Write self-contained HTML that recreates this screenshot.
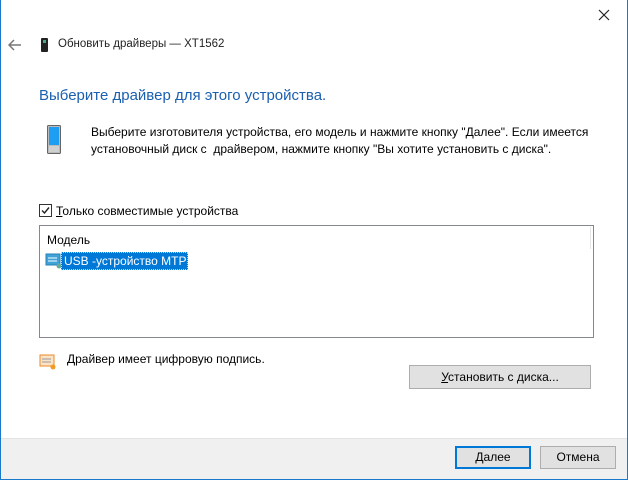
<!DOCTYPE html>
<html><head><meta charset="utf-8"><style>
*{margin:0;padding:0;box-sizing:border-box}
body{width:628px;height:480px;position:relative;background:#fff;font-family:"Liberation Sans",sans-serif;font-size:12px;color:#000;overflow:hidden}
.a{position:absolute;white-space:nowrap}
.btn{position:absolute;background:#e1e1e1;border:1px solid #adadad;text-align:center;line-height:20px;font-size:12px}
</style></head><body>
<div class="a" style="left:0;top:0;width:628px;height:480px;border:1px solid #1979ca;border-top:none"></div>
<div class="a" style="left:1px;top:438px;width:626px;height:41px;background:#f0f0f0;border-top:1px solid #e3e3e3"></div>
<svg class="a" style="left:8px;top:39px" width="14" height="12"><path d="M1 6H13M6 1L1 6L6 11" stroke="#777" stroke-width="1.5" fill="none"/></svg>
<svg class="a" style="left:598px;top:9px" width="12" height="12"><path d="M1 1L11 11M11 1L1 11" stroke="#222" stroke-width="1.2"/></svg>
<svg class="a" style="left:41px;top:38px" width="8" height="14"><rect x="0" y="0" width="7" height="14" rx="1" fill="#222"/><rect x="2" y="2" width="3" height="3" fill="#4a8"/></svg>
<div class="a" style="left:58px;top:38px;color:#222;font-size:11.5px">Обновить драйверы — XT1562</div>
<div class="a" style="left:39px;top:87px;font-size:15px;color:#1a5fb0">Выберите драйвер для этого устройства.</div>
<svg class="a" style="left:47px;top:125px" width="16" height="30"><rect x="0.5" y="0.5" width="13" height="28" rx="1" fill="#bbb" stroke="#666"/><rect x="2" y="2" width="10" height="18" fill="#1e9ef2"/><rect x="2" y="21" width="10" height="6" fill="#d0d0d0"/></svg>
<div class="a" style="left:91px;top:124px;line-height:17px">Выберите изготовителя устройства, его модель и нажмите кнопку "Далее". Если имеется<br>установочный диск с&nbsp; драйвером, нажмите кнопку "Вы хотите установить с диска".</div>
<div class="a" style="left:39px;top:204px;width:13px;height:13px;border:1px solid #333"></div>
<svg class="a" style="left:40px;top:205px" width="11" height="11"><path d="M2 5.5L4.5 8L9 2.5" stroke="#222" stroke-width="1.4" fill="none"/></svg>
<div class="a" style="left:56px;top:204px"><u>Т</u>олько совместимые устройства</div>
<div class="a" style="left:39px;top:225px;width:555px;height:113px;border:1px solid #828790"></div>
<div class="a" style="left:590px;top:227px;width:1px;height:22px;background:#e5e5e5"></div>
<div class="a" style="left:47px;top:233px">Модель</div>
<svg class="a" style="left:45px;top:253px" width="18" height="16"><rect x="1" y="1" width="14" height="11" fill="#3fa3d8" stroke="#2680b8"/><path d="M3 5H12M3 8H12" stroke="#fff"/><circle cx="14" cy="13" r="2.5" fill="#6a9"/></svg>
<div class="a" style="left:61px;top:252px;width:127px;height:18px;background:#0078d7;border:1px dotted #ffcf6b;color:#fff;line-height:16px;padding-left:2px">USB -устройство MTP</div>
<svg class="a" style="left:39px;top:354px" width="18" height="16"><rect x="1" y="1" width="14" height="11" fill="#fbe3c6" stroke="#e8892b"/><path d="M3 5H12M3 8H12" stroke="#999"/><circle cx="14" cy="13" r="2.5" fill="#f39a21"/></svg>
<div class="a" style="left:67px;top:352px">Драйвер имеет цифровую подпись.</div>
<div class="btn" style="left:409px;top:365px;width:182px;height:24px;line-height:22px"><u>У</u>становить с диска...</div>
<div class="btn" style="left:455px;top:446px;width:76px;height:23px;border:2px solid #0078d7;line-height:19px"><u>Д</u>алее</div>
<div class="btn" style="left:540px;top:446px;width:76px;height:23px;line-height:21px">Отмена</div>
</body></html>
